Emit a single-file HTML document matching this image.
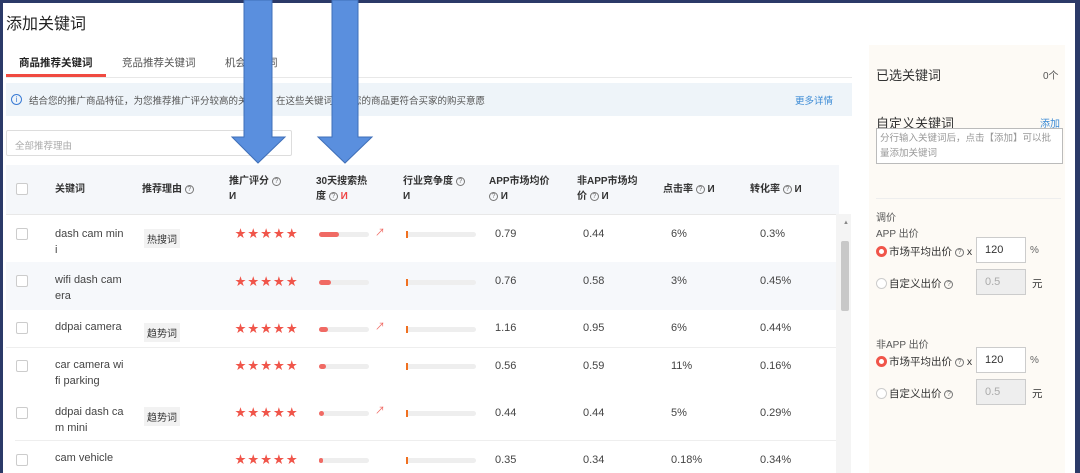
<!DOCTYPE html>
<html><head><meta charset="utf-8"><style>
*{margin:0;padding:0;box-sizing:border-box}
body{width:1080px;height:473px;overflow:hidden;background:#2b3a68;font-family:"Liberation Sans","Noto Sans CJK SC",sans-serif;color:#333;position:relative}
#pg{position:absolute;left:3px;top:3px;width:1072px;height:470px;background:#fff;overflow:hidden}
.a{position:absolute;white-space:nowrap}
.h{font-size:10px;color:#333;font-weight:bold;line-height:15px}
.c{font-size:11px;color:#444}
.q{display:inline-block;width:9px;height:9px;border:1px solid #777;border-radius:50%;font-size:7px;line-height:7px;text-align:center;color:#777;font-weight:normal;vertical-align:middle}
.cb{position:absolute;left:13px;width:12px;height:12px;border:1px solid #ccc;border-radius:2px;background:#fff}
.st{color:#f0554a;font-size:11px;letter-spacing:1.8px}
.bar{position:absolute;height:5px;width:50px;background:#eee;border-radius:3px}
.bar i{position:absolute;left:0;top:0;height:5px;background:#f06a64;border-radius:3px}
.bar2{position:absolute;height:5px;width:70px;background:#eee;border-radius:3px}
.bar2 i{position:absolute;left:0;top:-1px;height:7px;width:2px;background:#f07020}
.tag{position:absolute;background:#f2f2f2;font-size:10px;padding:2px 3px;color:#333}
.inp{position:absolute;border:1px solid #ccc;background:#fff;font-size:11px;padding-left:8px;line-height:24px;height:26px;width:50px}
.dis{background:#eee;color:#aaa}
.rad{position:absolute;width:11px;height:11px;border-radius:50%;border:1px solid #ccc;background:#fff}
.rad.on{border:3px solid #f0554a}
.tr{position:absolute;color:#f06a64;font-size:10px}
</style></head><body><div id="pg">
<div class="a" style="left:3px;top:7px;font-size:16px;color:#222">添加关键词</div>
<div class="a" style="left:16px;top:52px;font-size:10.5px;font-weight:bold;color:#222">商品推荐关键词</div>
<div class="a" style="left:119px;top:52px;font-size:10.5px;color:#555">竞品推荐关键词</div>
<div class="a" style="left:222px;top:52px;font-size:10.5px;color:#555">机会关键词</div>
<div class="a" style="left:3px;top:71px;width:100px;height:3px;background:#f04a40"></div>
<div class="a" style="left:3px;top:74px;width:846px;height:1px;background:#e8e8e8"></div>
<div class="a" style="left:3px;top:80px;width:846px;height:33px;background:#eef4f9"></div>
<div class="a" style="left:8px;top:91px;width:11px;height:11px;border:1px solid #3a7bd5;border-radius:50%;font-size:8px;line-height:9px;text-align:center;color:#3a7bd5">i</div>
<div class="a" style="left:26px;top:90px;font-size:9.5px;color:#555">结合您的推广商品特征，为您推荐推广评分较高的关键词，在这些关键词下，您的商品更符合买家的购买意愿</div>
<div class="a" style="left:792px;top:90px;font-size:9.5px;color:#3a8ad5">更多详情</div>
<div class="a" style="left:3px;top:127px;width:286px;height:26px;border:1px solid #ddd;border-radius:2px;font-size:9.5px;color:#aaa;padding:7px 0 0 8px">全部推荐理由</div>
<div class="a" style="left:3px;top:162px;width:833px;height:49px;background:#f5f7fa"></div>
<div class="cb" style="top:180px"></div>
<div class="a h" style="left:52px;top:179px">关键词</div>
<div class="a h" style="left:139px;top:179px">推荐理由 <span class="q">?</span></div>
<div class="a h" style="left:226px;top:171px">推广评分 <span class="q">?</span><br>И</div>
<div class="a h" style="left:313px;top:171px">30天搜索热<br>度 <span class="q">?</span> <span style="color:#e44">И</span></div>
<div class="a h" style="left:400px;top:171px">行业竞争度 <span class="q">?</span><br>И</div>
<div class="a h" style="left:486px;top:171px">APP市场均价<br><span class="q">?</span> И</div>
<div class="a h" style="left:574px;top:171px">非APP市场均<br>价 <span class="q">?</span> И</div>
<div class="a h" style="left:660px;top:179px">点击率 <span class="q">?</span> И</div>
<div class="a h" style="left:747px;top:179px">转化率 <span class="q">?</span> И</div>
<div class="a" style="left:3px;top:211px;width:833px;height:1px;background:#e8e8e8"></div>
<div class="a" style="left:3px;top:259px;width:833px;height:48px;background:#f6f8fb"></div>
<div class="a" style="left:3px;top:344px;width:833px;height:1px;background:#eee"></div>
<div class="a" style="left:12px;top:437px;width:824px;height:1px;background:#eee"></div>
<div class="a" style="left:833px;top:211px;width:15px;height:262px;background:#f4f4f4"></div>
<div class="a" style="left:838px;top:238px;width:8px;height:70px;background:#c8c8c8;border-radius:2px"></div>
<div class="a" style="left:840px;top:217px;font-size:6px;color:#888">▲</div>

<div class="cb" style="top:225px"></div><div class="a c" style="left:52px;top:223px;line-height:16px">dash cam min<br>i</div>
<div class="tag" style="left:141px;top:226px">热搜词</div>
<div class="a st" style="left:232px;top:222px">★★★★★</div>
<div class="bar" style="left:316px;top:229px"><i style="width:20px"></i></div><div class="tr" style="left:372px;top:221px">↗</div>
<div class="bar2" style="left:403px;top:229px"><i></i></div>
<div class="a c" style="left:492px;top:225px">0.79</div><div class="a c" style="left:580px;top:225px">0.44</div><div class="a c" style="left:668px;top:225px">6%</div><div class="a c" style="left:757px;top:225px">0.3%</div>

<div class="cb" style="top:272px"></div><div class="a c" style="left:52px;top:269px;line-height:16px">wifi dash cam<br>era</div>
<div class="a st" style="left:232px;top:270px">★★★★★</div>
<div class="bar" style="left:316px;top:277px"><i style="width:12px"></i></div>
<div class="bar2" style="left:403px;top:277px"><i></i></div>
<div class="a c" style="left:492px;top:272px">0.76</div><div class="a c" style="left:580px;top:272px">0.58</div><div class="a c" style="left:668px;top:272px">3%</div><div class="a c" style="left:757px;top:272px">0.45%</div>

<div class="cb" style="top:319px"></div><div class="a c" style="left:52px;top:318px">ddpai camera</div>
<div class="tag" style="left:141px;top:320px">趋势词</div>
<div class="a st" style="left:232px;top:317px">★★★★★</div>
<div class="bar" style="left:316px;top:324px"><i style="width:9px"></i></div><div class="tr" style="left:372px;top:315px">↗</div>
<div class="bar2" style="left:403px;top:324px"><i></i></div>
<div class="a c" style="left:492px;top:319px">1.16</div><div class="a c" style="left:580px;top:319px">0.95</div><div class="a c" style="left:668px;top:319px">6%</div><div class="a c" style="left:757px;top:319px">0.44%</div>

<div class="cb" style="top:357px"></div><div class="a c" style="left:52px;top:354px;line-height:16px">car camera wi<br>fi parking</div>
<div class="a st" style="left:232px;top:354px">★★★★★</div>
<div class="bar" style="left:316px;top:361px"><i style="width:7px"></i></div>
<div class="bar2" style="left:403px;top:361px"><i></i></div>
<div class="a c" style="left:492px;top:357px">0.56</div><div class="a c" style="left:580px;top:357px">0.59</div><div class="a c" style="left:668px;top:357px">11%</div><div class="a c" style="left:757px;top:357px">0.16%</div>

<div class="cb" style="top:404px"></div><div class="a c" style="left:52px;top:401px;line-height:16px">ddpai dash ca<br>m mini</div>
<div class="tag" style="left:141px;top:404px">趋势词</div>
<div class="a st" style="left:232px;top:401px">★★★★★</div>
<div class="bar" style="left:316px;top:408px"><i style="width:5px"></i></div><div class="tr" style="left:372px;top:399px">↗</div>
<div class="bar2" style="left:403px;top:408px"><i></i></div>
<div class="a c" style="left:492px;top:404px">0.44</div><div class="a c" style="left:580px;top:404px">0.44</div><div class="a c" style="left:668px;top:404px">5%</div><div class="a c" style="left:757px;top:404px">0.29%</div>

<div class="cb" style="top:451px"></div><div class="a c" style="left:52px;top:449px">cam vehicle</div>
<div class="a st" style="left:232px;top:448px">★★★★★</div>
<div class="bar" style="left:316px;top:455px"><i style="width:4px"></i></div>
<div class="bar2" style="left:403px;top:455px"><i></i></div>
<div class="a c" style="left:492px;top:451px">0.35</div><div class="a c" style="left:580px;top:451px">0.34</div><div class="a c" style="left:668px;top:451px">0.18%</div><div class="a c" style="left:757px;top:451px">0.34%</div>

<div class="a" style="left:866px;top:42px;width:196px;height:431px;background:#fdfaf5"></div>
<div class="a" style="left:873px;top:62px;font-size:13px;color:#333">已选关键词</div>
<div class="a" style="left:1040px;top:64px;font-size:10px;color:#555">0个</div>
<div class="a" style="left:873px;top:110px;font-size:13px;color:#333">自定义关键词</div>
<div class="a" style="left:1037px;top:112px;font-size:10px;color:#3a8ad5">添加</div>
<div class="a" style="left:873px;top:125px;width:187px;height:36px;border:1px solid #bbb;background:#fff;font-size:9.5px;color:#999;line-height:15px;padding:2px 3px;white-space:normal">分行输入关键词后，点击【添加】可以批量添加关键词</div>
<div class="a" style="left:873px;top:195px;width:185px;height:1px;background:#eee"></div>
<div class="a" style="left:873px;top:206px;font-size:10px;color:#555">调价</div>
<div class="a" style="left:873px;top:222px;font-size:10px;color:#555">APP 出价</div>
<div class="rad on" style="left:873px;top:243px"></div>
<div class="a" style="left:886px;top:241px;font-size:10.5px;color:#333">市场平均出价 <span class="q">?</span> x</div>
<div class="inp" style="left:973px;top:234px">120</div>
<div class="a" style="left:1027px;top:242px;font-size:10px;color:#666">%</div>
<div class="rad" style="left:873px;top:275px"></div>
<div class="a" style="left:886px;top:273px;font-size:10.5px;color:#333">自定义出价 <span class="q">?</span></div>
<div class="inp dis" style="left:973px;top:266px">0.5</div>
<div class="a" style="left:1029px;top:273px;font-size:10.5px;color:#333">元</div>
<div class="a" style="left:873px;top:333px;font-size:10px;color:#555">非APP 出价</div>
<div class="rad on" style="left:873px;top:353px"></div>
<div class="a" style="left:886px;top:351px;font-size:10.5px;color:#333">市场平均出价 <span class="q">?</span> x</div>
<div class="inp" style="left:973px;top:344px">120</div>
<div class="a" style="left:1027px;top:352px;font-size:10px;color:#666">%</div>
<div class="rad" style="left:873px;top:385px"></div>
<div class="a" style="left:886px;top:383px;font-size:10.5px;color:#333">自定义出价 <span class="q">?</span></div>
<div class="inp dis" style="left:973px;top:376px">0.5</div>
<div class="a" style="left:1029px;top:383px;font-size:10.5px;color:#333">元</div>
</div>
<svg class="a" style="left:0;top:0" width="1080" height="473">
<path d="M244 0 L272 0 L272 137 L285 137 L258 163 L232 137 L244 137 Z" fill="#5a8fde" stroke="#3f6fb8" stroke-width="1"/>
<path d="M332 0 L358 0 L358 137 L372 137 L345 163 L318 137 L332 137 Z" fill="#5a8fde" stroke="#3f6fb8" stroke-width="1"/>
</svg>
</body></html>
